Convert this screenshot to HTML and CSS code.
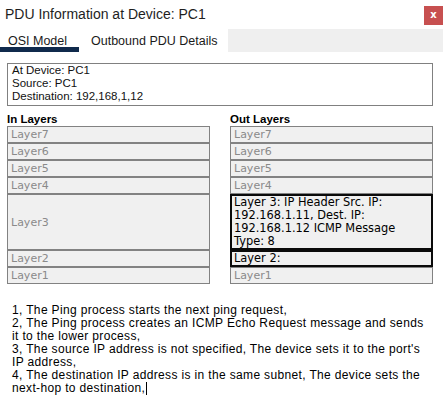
FILE: index.html
```html
<!DOCTYPE html>
<html>
<head>
<meta charset="utf-8">
<link rel="stylesheet" href="styles.css">
</head>
<body>
<div class="window">
  <div class="titlebar">
    <div class="title">PDU Information at Device: PC1</div>
    <div class="close">x</div>
  </div>
  <div class="tabs">
    <div class="tab tab-active">OSI Model</div>
    <div class="tab tab-second">Outbound PDU Details</div>
    <div class="tab-fill"></div>
  </div>
  <div class="info">
    <div>At Device: PC1</div>
    <div>Source: PC1</div>
    <div>Destination: 192,168,1,12</div>
  </div>
  <div class="layers">
    <div class="col">
      <div class="col-head">In Layers</div>
      <div class="layer">Layer7</div>
      <div class="layer">Layer6</div>
      <div class="layer">Layer5</div>
      <div class="layer">Layer4</div>
      <div class="layer layer-tall">Layer3</div>
      <div class="layer">Layer2</div>
      <div class="layer">Layer1</div>
    </div>
    <div class="col">
      <div class="col-head">Out Layers</div>
      <div class="layer">Layer7</div>
      <div class="layer">Layer6</div>
      <div class="layer">Layer5</div>
      <div class="layer">Layer4</div>
      <div class="layer layer-tall layer-on layer-top">Layer 3: IP Header Src. IP:<br>192.168.1.11, Dest. IP:<br>192.168.1.12 ICMP Message<br>Type: 8</div>
      <div class="layer layer-on">Layer 2:</div>
      <div class="layer">Layer1</div>
    </div>
  </div>
  <div class="desc">
    <div>1, The Ping process starts the next ping request,</div>
    <div>2, The Ping process creates an ICMP Echo Request message and sends<br>it to the lower process,</div>
    <div>3, The source IP address is not specified, The device sets it to the port's<br>IP address,</div>
    <div>4, The destination IP address is in the same subnet, The device sets the<br>next-hop to destination,<span class="caret"></span></div>
  </div>
</div>
</body>
</html>
```

FILE: styles.css
```css
html, body {
  margin: 0;
  padding: 0;
  background: #ffffff;
}

.window {
  width: 443px;
  height: 418px;
  background: #ffffff;
  font-family: "Liberation Sans", Arial, sans-serif;
  color: #1a1a1a;
  overflow: hidden;
}

.titlebar {
  height: 29px;
  display: flex;
  justify-content: space-between;
  align-items: flex-start;
}

.title {
  padding-left: 5px;
  font-size: 14px;
  line-height: 28px;
  color: #1e1e1e;
}

.close {
  margin-top: 6px;
  width: 19px;
  height: 19px;
  background: #c75050;
  color: #ffffff;
  font-family: "DejaVu Sans", sans-serif;
  font-weight: bold;
  font-size: 10px;
  line-height: 18px;
  text-align: center;
}

.tabs {
  height: 23px;
  display: flex;
}

.tab {
  font-size: 12.5px;
  line-height: 12px;
  padding-top: 6px;
  height: 23px;
  box-sizing: border-box;
  background: #ffffff;
  color: #1a1a1a;
}

.tab-active {
  width: 79px;
  padding-left: 8px;
  border-bottom: 5px solid #102a4c;
}

.tab-second {
  width: 149px;
  padding-left: 12px;
}

.tab-fill {
  flex: 1;
  background: #efefef;
}

.info {
  margin: 11px 10px 0 7px;
  height: 43px;
  box-sizing: border-box;
  border: 1px solid #808080;
  padding: 0 4px;
  font-size: 11.5px;
  line-height: 13px;
  color: #111111;
}

.layers {
  margin: 7px 10px 0 7px;
  display: grid;
  grid-template-columns: 203px 203px;
  column-gap: 20px;
}

.col {
  display: flex;
  flex-direction: column;
}

.col-head {
  font-weight: bold;
  font-size: 11.5px;
  line-height: 13px;
  color: #000000;
}

.layer {
  height: 17px;
  box-sizing: border-box;
  border: 1px solid #828282;
  background: #f0f0f0;
  color: #8a8a8a;
  font-family: "DejaVu Sans", Verdana, sans-serif;
  font-size: 11px;
  line-height: 15px;
  padding-left: 3px;
  display: flex;
  align-items: center;
}

.layer-tall {
  height: 56px;
}

.layer-on {
  border: 2px solid #0a0a0a;
  color: #000000;
  padding-left: 2px;
  font-size: 11.4px;
  line-height: 13px;
}

.layer-top {
  display: block;
}

.desc {
  margin-top: 20px;
  padding-left: 12px;
  font-size: 12px;
  line-height: 13px;
  letter-spacing: 0.35px;
  color: #000000;
  white-space: nowrap;
}

.caret {
  display: inline-block;
  width: 1px;
  height: 13px;
  background: #000000;
  vertical-align: -3px;
  margin-left: 1px;
}
```
